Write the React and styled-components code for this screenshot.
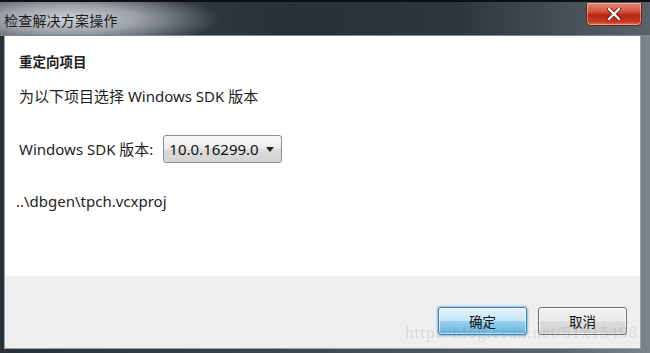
import React from "react";
import styled, { createGlobalStyle } from "styled-components";

const Global = createGlobalStyle`
  html, body {
    margin: 0;
    padding: 0;
    background: #1c2126;
  }
  body {
    font-family: "Noto Sans", "Noto Sans CJK SC", sans-serif;
  }
`;

const Window = styled.div`
  position: relative;
  width: 650px;
  height: 353px;
  display: flex;
  flex-direction: column;
  box-sizing: border-box;
  padding: 0 9px 4px 4px;
  background: linear-gradient(90deg, #2a3038 0%, #3a424b 40%, #5a626b 85%, #7c848c 100%);
  border-top: 2px solid #0d0f12;
  overflow: hidden;
`;

const TitleBar = styled.div`
  height: 33px;
  display: flex;
  align-items: center;
  justify-content: space-between;
  margin-left: -4px;
  margin-right: -9px;
  padding-left: 4px;
  padding-right: 8px;
  background:
    radial-gradient(ellipse 150px 30px at 70px 17px, rgba(215, 218, 222, 0.95) 0%, rgba(190, 195, 200, 0.75) 45%, rgba(60, 68, 78, 0) 100%),
    linear-gradient(90deg, #3a424b 0%, #283038 45%, #2d353e 70%, #5a636c 100%);
  border-bottom: 1px solid #7f8892;
`;

const Title = styled.span`
  font-family: "Noto Sans CJK SC", sans-serif;
  font-size: 14px;
  color: #1a1a1a;
  letter-spacing: 0.2px;
  margin-top: 2px;
`;

const CloseButton = styled.button`
  width: 56px;
  height: 23px;
  margin-top: -8px;
  border: 1px solid #5a2a22;
  border-top: none;
  border-radius: 0 0 5px 5px;
  background: linear-gradient(180deg, #e48878 0%, #d2513c 40%, #b8250f 55%, #c63a24 85%, #de7460 100%);
  box-shadow: inset 0 0 0 1px rgba(255, 210, 200, 0.5);
  display: flex;
  align-items: center;
  justify-content: center;
  padding: 0;
`;

const Panel = styled.div`
  flex: 1;
  display: flex;
  flex-direction: column;
  background: #ffffff;
  border: 1px solid #9aa2aa;
  border-top: none;
`;

const Body = styled.div`
  flex: 1;
  padding: 14px 0 0 14px;
  display: flex;
  flex-direction: column;
`;

const Heading = styled.div`
  font-family: "Noto Sans CJK SC", sans-serif;
  font-weight: bold;
  font-size: 13.5px;
  color: #1e1e1e;
  height: 22px;
  line-height: 22px;
`;

const Text = styled.div`
  font-size: 15px;
  color: #1e1e1e;
  line-height: 20px;
  white-space: nowrap;
  margin-top: ${({ $top }) => $top}px;
  margin-left: ${({ $left }) => $left || 0}px;
`;

const Row = styled.div`
  display: flex;
  align-items: center;
  gap: 10px;
  margin-top: 29px;
`;

const Select = styled.div`
  width: 119px;
  height: 28px;
  box-sizing: border-box;
  border: 1px solid #8b9198;
  border-radius: 3px;
  background: linear-gradient(180deg, #f7f7f7 0%, #ececec 48%, #dcdcdc 52%, #d4d4d4 100%);
  display: flex;
  align-items: center;
  justify-content: space-between;
  padding: 0 7px 0 5px;
  font-size: 15px;
  color: #111;
`;

const Arrow = styled.span`
  width: 0;
  height: 0;
  border-left: 4px solid transparent;
  border-right: 4px solid transparent;
  border-top: 5px solid #222;
`;

const Footer = styled.div`
  height: 72px;
  background: #efefef;
  display: flex;
  justify-content: flex-end;
  align-items: flex-start;
  gap: 11px;
  padding: 31px 13px 0 0;
  box-sizing: border-box;
`;

const Button = styled.button`
  width: 89px;
  height: 28px;
  border-radius: 3px;
  font-family: "Noto Sans CJK SC", sans-serif;
  font-size: 13.5px;
  color: #111;
  padding: 0;
  border: 1px solid ${({ $primary }) => ($primary ? "#3c7fb1" : "#707070")};
  background: ${({ $primary }) =>
    $primary
      ? "linear-gradient(180deg, #e5f4fc 0%, #c4e5f6 48%, #98d1ef 52%, #68b3db 100%)"
      : "linear-gradient(180deg, #f2f2f2 0%, #ebebeb 48%, #dddddd 52%, #cfcfcf 100%)"};
  box-shadow: ${({ $primary }) =>
    $primary ? "0 0 2px 1px rgba(60, 160, 220, 0.6), inset 0 0 0 1px rgba(255,255,255,0.6)" : "inset 0 0 0 1px rgba(255,255,255,0.7)"};
`;

const Watermark = styled.div`
  position: absolute;
  right: 12px;
  bottom: 10px;
  font-family: "Liberation Serif", serif;
  font-size: 17px;
  letter-spacing: 1px;
  color: rgba(120, 120, 120, 0.2);
  pointer-events: none;
`;

export default function App() {
  return (
    <>
      <Global />
      <Window>
        <TitleBar>
          <Title>检查解决方案操作</Title>
          <CloseButton aria-label="close">
            <svg width="14" height="12" viewBox="0 0 14 12">
              <path d="M2 1 L12 11 M12 1 L2 11" stroke="#5a2018" strokeWidth="4" strokeLinecap="round" />
              <path d="M2 1 L12 11 M12 1 L2 11" stroke="#ffffff" strokeWidth="2.4" strokeLinecap="round" />
            </svg>
          </CloseButton>
        </TitleBar>
        <Panel>
          <Body>
            <Heading>重定向项目</Heading>
            <Text $top={14}>为以下项目选择 Windows SDK 版本</Text>
            <Row>
              <Text $top={0}>Windows SDK 版本:</Text>
              <Select>
                10.0.16299.0
                <Arrow />
              </Select>
            </Row>
            <Text $top={28} $left={-3}>..\dbgen\tpch.vcxproj</Text>
          </Body>
          <Footer>
            <Button $primary>确定</Button>
            <Button>取消</Button>
          </Footer>
        </Panel>
        <Watermark>http://blog.csdn.net/51x15498</Watermark>
      </Window>
    </>
  );
}
